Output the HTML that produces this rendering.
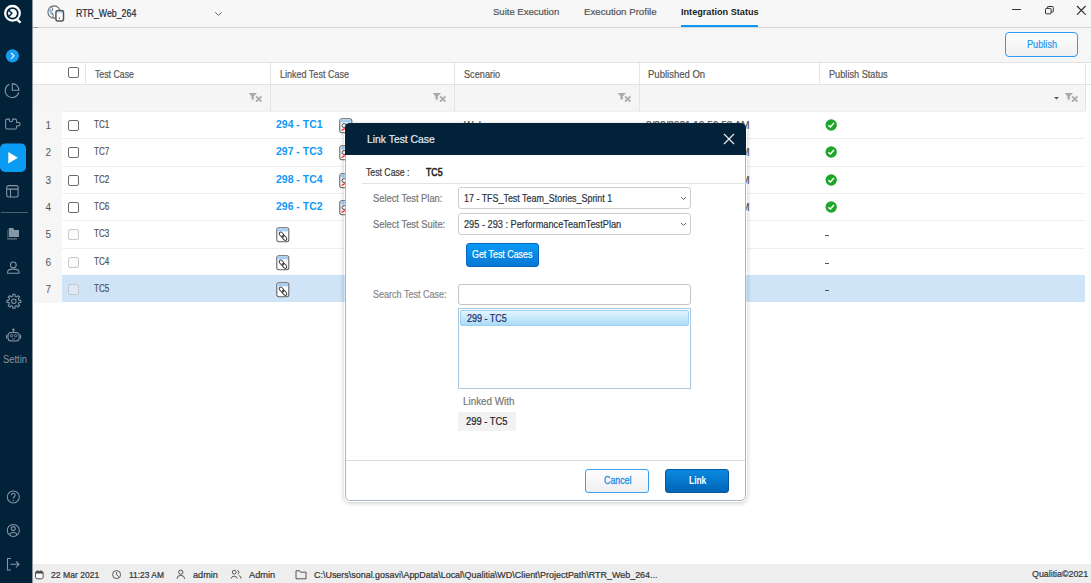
<!DOCTYPE html>
<html><head><meta charset="utf-8">
<style>
*{margin:0;padding:0;box-sizing:border-box}
html,body{width:1091px;height:583px;overflow:hidden;background:#fff;font-family:"Liberation Sans",sans-serif;color:#333}
.a{position:absolute}
.t{position:absolute;white-space:nowrap;line-height:1;-webkit-text-stroke:0.2px currentColor}
</style></head><body>
<div class="a" style="left:32px;top:0px;width:1059px;height:27px;background:#f7f7f7"></div>
<div class="a" style="left:32px;top:27px;width:1059px;height:1px;background:#d6d6d6"></div>
<div class="a" style="left:32px;top:27px;width:6px;height:1px;background:#9a9a9a"></div>
<div class="a" style="left:32px;top:28px;width:1059px;height:34px;background:#f6f6f6"></div>
<div class="a" style="left:32px;top:62px;width:1059px;height:1px;background:#e2e2e2"></div>
<div class="a" style="left:32px;top:63px;width:1053px;height:21px;background:#fff"></div>
<div class="a" style="left:32px;top:84px;width:1059px;height:1px;background:#e2e2e2"></div>
<div class="a" style="left:32px;top:85px;width:1053px;height:26px;background:#f5f5f5"></div>
<div class="a" style="left:85px;top:63px;width:1px;height:21px;background:#e4e4e4"></div>
<div class="a" style="left:270px;top:63px;width:1px;height:48px;background:#e4e4e4"></div>
<div class="a" style="left:454px;top:63px;width:1px;height:48px;background:#e4e4e4"></div>
<div class="a" style="left:639px;top:63px;width:1px;height:48px;background:#e4e4e4"></div>
<div class="a" style="left:819px;top:63px;width:1px;height:21px;background:#e4e4e4"></div>
<div class="a" style="left:1085px;top:63px;width:1px;height:48px;background:#e4e4e4"></div>
<svg class="a" style="left:44px;top:2px" width="24" height="22" viewBox="0 0 24 22">
 <defs><linearGradient id="pg" x1="0" y1="0" x2="0" y2="1"><stop offset="0" stop-color="#8cc4f7"/><stop offset="0.35" stop-color="#fff"/></linearGradient></defs>
 <circle cx="10" cy="10" r="6.1" fill="#fff" stroke="#6a6a6a" stroke-width="1.1"/>
 <path d="M5.2 6.2 Q7 5.5 7.6 8.5 Q8 10.5 9.6 11.5 Q9.8 13 8.6 13.5 Q6.5 12.5 5.8 10.8 Q4.6 9 5.2 6.2 Z" fill="#8cc0f2"/>
 <path d="M7.8 14.5 Q9 15 9.5 16" fill="none" stroke="#8cc0f2" stroke-width="1.2"/>
 <path d="M7.5 4.5 Q9.5 7 8.5 9 M8 11 Q10 13 9 16" fill="none" stroke="#555" stroke-width="0.8"/>
 <rect x="11.9" y="8.6" width="7.6" height="10.3" rx="2" fill="url(#pg)" stroke="#555" stroke-width="1.5"/>
 <circle cx="15.4" cy="16.3" r="0.75" fill="#444"/>
</svg>
<div class="t" style="left:75.80px;top:8.36px;font-size:10.5px;color:#1e2a3a;transform:scaleX(0.8376);transform-origin:0 0;">RTR_Web_264</div>
<svg class="a" style="left:214px;top:11px" width="9" height="6" viewBox="0 0 9 6"><path d="M1.2 1.3 L4.4 4.3 L7.6 1.3" fill="none" stroke="#555" stroke-width="0.9"/></svg>
<div class="t" style="left:492.80px;top:7.21px;font-size:9.5px;color:#555;transform:scaleX(1.0028);transform-origin:0 0;">Suite Execution</div>
<div class="t" style="left:583.70px;top:7.21px;font-size:9.5px;color:#555;transform:scaleX(1.0184);transform-origin:0 0;">Execution Profile</div>
<div class="t" style="left:680.60px;top:7.21px;font-size:9.5px;color:#222;font-weight:bold;-webkit-text-stroke:0;transform:scaleX(0.9609);transform-origin:0 0;">Integration Status</div>
<div class="a" style="left:681px;top:25px;width:77px;height:2px;background:#0a97f5"></div>
<div class="a" style="left:1012px;top:9px;width:9px;height:1px;background:#333"></div>
<svg class="a" style="left:1045px;top:6px" width="10" height="9" viewBox="0 0 10 9"><rect x="0.5" y="2.4" width="5.6" height="5.4" rx="0.8" fill="none" stroke="#333" stroke-width="1"/><path d="M2.4 2.4 V1.3 Q2.4 0.5 3.2 0.5 H7.5 Q8.3 0.5 8.3 1.3 V5.3 Q8.3 6.1 7.5 6.1 H6.1" fill="none" stroke="#333" stroke-width="1"/></svg>
<svg class="a" style="left:1076px;top:5px" width="11" height="11" viewBox="0 0 11 11"><path d="M1 1 L9.6 9.6 M9.6 1 L1 9.6" stroke="#2a2a2a" stroke-width="1.1"/></svg>
<div class="a" style="left:1005px;top:32px;width:73px;height:25px;border:1.6px solid #2a9cf7;border-radius:4px;background:linear-gradient(#fefefe,#efefef)"></div>
<div class="t" style="left:1026.60px;top:39.78px;font-size:10px;color:#1e96f5;transform:scaleX(0.9177);transform-origin:0 0;">Publish</div>
<div class="a" style="left:68px;top:67px;width:11px;height:11px;border:1px solid #6a6a6a;border-radius:2px;background:#fff"></div>
<div class="t" style="left:95.10px;top:69.36px;font-size:10.5px;color:#555;transform:scaleX(0.8332);transform-origin:0 0;">Test Case</div>
<div class="t" style="left:279.80px;top:69.36px;font-size:10.5px;color:#555;transform:scaleX(0.8574);transform-origin:0 0;">Linked Test Case</div>
<div class="t" style="left:464.00px;top:69.36px;font-size:10.5px;color:#555;transform:scaleX(0.8735);transform-origin:0 0;">Scenario</div>
<div class="t" style="left:648.40px;top:69.36px;font-size:10.5px;color:#555;transform:scaleX(0.9057);transform-origin:0 0;">Published On</div>
<div class="t" style="left:829.30px;top:69.36px;font-size:10.5px;color:#555;transform:scaleX(0.8745);transform-origin:0 0;">Publish Status</div>
<svg class="a" style="left:248px;top:92px" width="15" height="11" viewBox="0 0 15 11"><path d="M0.6 0.9 H9 L5.9 4.2 V7.6 H3.4 V4.2 Z" fill="#ababab"/><path d="M8.1 4.4 L13.4 9.6 M13.4 4.4 L8.1 9.6" stroke="#ababab" stroke-width="1.8"/></svg>
<svg class="a" style="left:432px;top:92px" width="15" height="11" viewBox="0 0 15 11"><path d="M0.6 0.9 H9 L5.9 4.2 V7.6 H3.4 V4.2 Z" fill="#ababab"/><path d="M8.1 4.4 L13.4 9.6 M13.4 4.4 L8.1 9.6" stroke="#ababab" stroke-width="1.8"/></svg>
<svg class="a" style="left:617px;top:92px" width="15" height="11" viewBox="0 0 15 11"><path d="M0.6 0.9 H9 L5.9 4.2 V7.6 H3.4 V4.2 Z" fill="#ababab"/><path d="M8.1 4.4 L13.4 9.6 M13.4 4.4 L8.1 9.6" stroke="#ababab" stroke-width="1.8"/></svg>
<svg class="a" style="left:1064px;top:92px" width="15" height="11" viewBox="0 0 15 11"><path d="M0.6 0.9 H9 L5.9 4.2 V7.6 H3.4 V4.2 Z" fill="#ababab"/><path d="M8.1 4.4 L13.4 9.6 M13.4 4.4 L8.1 9.6" stroke="#ababab" stroke-width="1.8"/></svg>
<svg class="a" style="left:1054px;top:97px" width="6" height="3" viewBox="0 0 6 3"><path d="M0 0 H5 L2.5 2.5 Z" fill="#555"/></svg>
<div class="a" style="left:34px;top:111px;width:28px;height:192px;background:#f6f6f6"></div>
<div class="a" style="left:62px;top:111px;width:1023px;height:27px;background:#fff"></div>
<div class="a" style="left:62px;top:111px;width:1023px;height:1px;background:#efefef"></div>
<div class="t" style="left:45.50px;top:120.78px;font-size:10px;color:#555;-webkit-text-stroke:0;">1</div>
<div class="a" style="left:68px;top:120px;width:11px;height:11px;border:1px solid #6a6a6a;border-radius:2px;background:#fff"></div>
<div class="t" style="left:94.00px;top:119.78px;font-size:10px;color:#505050;transform:scaleX(0.8046);transform-origin:0 0;">TC1</div>
<div class="t" style="left:275.60px;top:118.94px;font-size:11px;color:#0f9af7;font-weight:bold;-webkit-text-stroke:0;transform:scaleX(0.9507);transform-origin:0 0;">294 - TC1</div>
<div class="t" style="left:464.00px;top:120.78px;font-size:10px;color:#555;">Web</div>
<div class="t" style="left:646.00px;top:120.78px;font-size:10px;color:#555;transform:scaleX(1.0008);transform-origin:0 0;">3/22/2021 10:56:53 AM</div>
<svg class="a" style="left:825px;top:119px" width="13" height="13" viewBox="0 0 13 13"><circle cx="6.2" cy="6" r="5.7" fill="#1fa52a"/><path d="M3.4 6.4 L5.4 8 L8.9 3.9" fill="none" stroke="#fff" stroke-width="1.5"/></svg>
<svg class="a" style="left:339px;top:118px" width="14" height="16" viewBox="0 0 14 16"><rect x="0.8" y="0.8" width="12" height="14" rx="2" fill="#fff" stroke="#5e5e5e" stroke-width="1.05"/><rect x="1.4" y="1.4" width="10.8" height="3" fill="#a5cdf5"/><circle cx="5" cy="7.5" r="2" fill="none" stroke="#444" stroke-width="0.9"/><circle cx="8" cy="7.5" r="1.5" fill="none" stroke="#444" stroke-width="0.9"/><path d="M2.5 12.5 L7 10" stroke="#f22" stroke-width="1.3"/></svg>
<div class="a" style="left:62px;top:138px;width:1023px;height:28px;background:#fff"></div>
<div class="a" style="left:62px;top:138px;width:1023px;height:1px;background:#efefef"></div>
<div class="t" style="left:45.50px;top:147.78px;font-size:10px;color:#555;-webkit-text-stroke:0;">2</div>
<div class="a" style="left:68px;top:147px;width:11px;height:11px;border:1px solid #6a6a6a;border-radius:2px;background:#fff"></div>
<div class="t" style="left:94.00px;top:146.78px;font-size:10px;color:#505050;transform:scaleX(0.8046);transform-origin:0 0;">TC7</div>
<div class="t" style="left:275.60px;top:145.94px;font-size:11px;color:#0f9af7;font-weight:bold;-webkit-text-stroke:0;transform:scaleX(0.9507);transform-origin:0 0;">297 - TC3</div>
<div class="t" style="left:464.00px;top:147.78px;font-size:10px;color:#555;">Web</div>
<div class="t" style="left:646.00px;top:147.78px;font-size:10px;color:#555;transform:scaleX(1.0008);transform-origin:0 0;">3/22/2021 10:56:53 AM</div>
<svg class="a" style="left:825px;top:146px" width="13" height="13" viewBox="0 0 13 13"><circle cx="6.2" cy="6" r="5.7" fill="#1fa52a"/><path d="M3.4 6.4 L5.4 8 L8.9 3.9" fill="none" stroke="#fff" stroke-width="1.5"/></svg>
<svg class="a" style="left:339px;top:145px" width="14" height="16" viewBox="0 0 14 16"><rect x="0.8" y="0.8" width="12" height="14" rx="2" fill="#fff" stroke="#5e5e5e" stroke-width="1.05"/><rect x="1.4" y="1.4" width="10.8" height="3" fill="#a5cdf5"/><circle cx="5" cy="7.5" r="2" fill="none" stroke="#444" stroke-width="0.9"/><circle cx="8" cy="7.5" r="1.5" fill="none" stroke="#444" stroke-width="0.9"/><path d="M2.5 12.5 L7 10" stroke="#f22" stroke-width="1.3"/></svg>
<div class="a" style="left:62px;top:166px;width:1023px;height:27px;background:#fff"></div>
<div class="a" style="left:62px;top:166px;width:1023px;height:1px;background:#efefef"></div>
<div class="t" style="left:45.50px;top:175.78px;font-size:10px;color:#555;-webkit-text-stroke:0;">3</div>
<div class="a" style="left:68px;top:175px;width:11px;height:11px;border:1px solid #6a6a6a;border-radius:2px;background:#fff"></div>
<div class="t" style="left:94.00px;top:174.78px;font-size:10px;color:#505050;transform:scaleX(0.8046);transform-origin:0 0;">TC2</div>
<div class="t" style="left:275.60px;top:173.94px;font-size:11px;color:#0f9af7;font-weight:bold;-webkit-text-stroke:0;transform:scaleX(0.9507);transform-origin:0 0;">298 - TC4</div>
<div class="t" style="left:464.00px;top:175.78px;font-size:10px;color:#555;">Web</div>
<div class="t" style="left:646.00px;top:175.78px;font-size:10px;color:#555;transform:scaleX(1.0008);transform-origin:0 0;">3/22/2021 10:56:53 AM</div>
<svg class="a" style="left:825px;top:174px" width="13" height="13" viewBox="0 0 13 13"><circle cx="6.2" cy="6" r="5.7" fill="#1fa52a"/><path d="M3.4 6.4 L5.4 8 L8.9 3.9" fill="none" stroke="#fff" stroke-width="1.5"/></svg>
<svg class="a" style="left:339px;top:173px" width="14" height="16" viewBox="0 0 14 16"><rect x="0.8" y="0.8" width="12" height="14" rx="2" fill="#fff" stroke="#5e5e5e" stroke-width="1.05"/><rect x="1.4" y="1.4" width="10.8" height="3" fill="#a5cdf5"/><circle cx="5" cy="7.5" r="2" fill="none" stroke="#444" stroke-width="0.9"/><circle cx="8" cy="7.5" r="1.5" fill="none" stroke="#444" stroke-width="0.9"/><path d="M2.5 12.5 L7 10" stroke="#f22" stroke-width="1.3"/></svg>
<div class="a" style="left:62px;top:193px;width:1023px;height:27px;background:#fff"></div>
<div class="a" style="left:62px;top:193px;width:1023px;height:1px;background:#efefef"></div>
<div class="t" style="left:45.50px;top:202.78px;font-size:10px;color:#555;-webkit-text-stroke:0;">4</div>
<div class="a" style="left:68px;top:202px;width:11px;height:11px;border:1px solid #6a6a6a;border-radius:2px;background:#fff"></div>
<div class="t" style="left:94.00px;top:201.78px;font-size:10px;color:#505050;transform:scaleX(0.8046);transform-origin:0 0;">TC6</div>
<div class="t" style="left:275.60px;top:200.94px;font-size:11px;color:#0f9af7;font-weight:bold;-webkit-text-stroke:0;transform:scaleX(0.9507);transform-origin:0 0;">296 - TC2</div>
<div class="t" style="left:464.00px;top:202.78px;font-size:10px;color:#555;">Web</div>
<div class="t" style="left:646.00px;top:202.78px;font-size:10px;color:#555;transform:scaleX(1.0008);transform-origin:0 0;">3/22/2021 10:56:53 AM</div>
<svg class="a" style="left:825px;top:201px" width="13" height="13" viewBox="0 0 13 13"><circle cx="6.2" cy="6" r="5.7" fill="#1fa52a"/><path d="M3.4 6.4 L5.4 8 L8.9 3.9" fill="none" stroke="#fff" stroke-width="1.5"/></svg>
<svg class="a" style="left:339px;top:200px" width="14" height="16" viewBox="0 0 14 16"><rect x="0.8" y="0.8" width="12" height="14" rx="2" fill="#fff" stroke="#5e5e5e" stroke-width="1.05"/><rect x="1.4" y="1.4" width="10.8" height="3" fill="#a5cdf5"/><circle cx="5" cy="7.5" r="2" fill="none" stroke="#444" stroke-width="0.9"/><circle cx="8" cy="7.5" r="1.5" fill="none" stroke="#444" stroke-width="0.9"/><path d="M2.5 12.5 L7 10" stroke="#f22" stroke-width="1.3"/></svg>
<div class="a" style="left:62px;top:220px;width:1023px;height:28px;background:#fff"></div>
<div class="a" style="left:62px;top:220px;width:1023px;height:1px;background:#efefef"></div>
<div class="t" style="left:45.50px;top:229.78px;font-size:10px;color:#555;-webkit-text-stroke:0;">5</div>
<div class="a" style="left:68px;top:229px;width:11px;height:11px;border:1px solid #c8c8c8;border-radius:2px;background:#fbfbfb"></div>
<div class="t" style="left:94.00px;top:228.78px;font-size:10px;color:#505050;transform:scaleX(0.8046);transform-origin:0 0;">TC3</div>
<div class="a" style="left:825px;top:235px;width:4px;height:1px;background:#555"></div>
<svg class="a" style="left:276px;top:227px" width="14" height="16" viewBox="0 0 14 16"><rect x="0.8" y="0.8" width="12" height="14" rx="2" fill="#fff" stroke="#5e5e5e" stroke-width="1.05"/><rect x="1.4" y="1.4" width="10.8" height="3" fill="#a5cdf5"/><ellipse cx="5.6" cy="7.6" rx="2.9" ry="1.7" transform="rotate(50 5.6 7.6)" fill="none" stroke="#3a3a3a" stroke-width="0.95"/><ellipse cx="8.4" cy="10.8" rx="2.9" ry="1.7" transform="rotate(50 8.4 10.8)" fill="none" stroke="#3a3a3a" stroke-width="0.95"/></svg>
<div class="a" style="left:62px;top:248px;width:1023px;height:27px;background:#fff"></div>
<div class="a" style="left:62px;top:248px;width:1023px;height:1px;background:#efefef"></div>
<div class="t" style="left:45.50px;top:257.79px;font-size:10px;color:#555;-webkit-text-stroke:0;">6</div>
<div class="a" style="left:68px;top:257px;width:11px;height:11px;border:1px solid #c8c8c8;border-radius:2px;background:#fbfbfb"></div>
<div class="t" style="left:94.00px;top:256.79px;font-size:10px;color:#505050;transform:scaleX(0.8046);transform-origin:0 0;">TC4</div>
<div class="a" style="left:825px;top:263px;width:4px;height:1px;background:#555"></div>
<svg class="a" style="left:276px;top:255px" width="14" height="16" viewBox="0 0 14 16"><rect x="0.8" y="0.8" width="12" height="14" rx="2" fill="#fff" stroke="#5e5e5e" stroke-width="1.05"/><rect x="1.4" y="1.4" width="10.8" height="3" fill="#a5cdf5"/><ellipse cx="5.6" cy="7.6" rx="2.9" ry="1.7" transform="rotate(50 5.6 7.6)" fill="none" stroke="#3a3a3a" stroke-width="0.95"/><ellipse cx="8.4" cy="10.8" rx="2.9" ry="1.7" transform="rotate(50 8.4 10.8)" fill="none" stroke="#3a3a3a" stroke-width="0.95"/></svg>
<div class="a" style="left:62px;top:275px;width:1023px;height:27px;background:#cfe4f6"></div>
<div class="t" style="left:45.50px;top:284.79px;font-size:10px;color:#555;-webkit-text-stroke:0;">7</div>
<div class="a" style="left:68px;top:284px;width:11px;height:11px;border:1px solid #c8c8c8;border-radius:2px;background:#dde9f5"></div>
<div class="t" style="left:94.00px;top:283.79px;font-size:10px;color:#505050;transform:scaleX(0.8046);transform-origin:0 0;">TC5</div>
<div class="a" style="left:825px;top:290px;width:4px;height:1px;background:#555"></div>
<svg class="a" style="left:276px;top:282px" width="14" height="16" viewBox="0 0 14 16"><rect x="0.8" y="0.8" width="12" height="14" rx="2" fill="#fff" stroke="#5e5e5e" stroke-width="1.05"/><rect x="1.4" y="1.4" width="10.8" height="3" fill="#a5cdf5"/><ellipse cx="5.6" cy="7.6" rx="2.9" ry="1.7" transform="rotate(50 5.6 7.6)" fill="none" stroke="#3a3a3a" stroke-width="0.95"/><ellipse cx="8.4" cy="10.8" rx="2.9" ry="1.7" transform="rotate(50 8.4 10.8)" fill="none" stroke="#3a3a3a" stroke-width="0.95"/></svg>
<div class="a" style="left:32px;top:564px;width:1059px;height:19px;background:#eeeeee"></div>
<svg class="a" style="left:34px;top:569px" width="11" height="11" viewBox="0 0 11 11"><rect x="1.5" y="2.4" width="7.6" height="7.4" rx="1.6" fill="#fafafa" stroke="#4a4a4a" stroke-width="0.95"/><path d="M1.5 4.6 V3.6 Q1.5 2.4 3 2.4 H7.6 Q9.1 2.4 9.1 3.6 V4.6 Z" fill="#4a4a4a"/><path d="M3.7 1.2 V2.6 M6.9 1.2 V2.6" stroke="#4a4a4a" stroke-width="0.9"/></svg>
<div class="t" style="left:51.10px;top:570.63px;font-size:9px;color:#333;transform:scaleX(0.9578);transform-origin:0 0;">22 Mar 2021</div>
<svg class="a" style="left:112px;top:570px" width="10" height="10" viewBox="0 0 10 10"><circle cx="4.6" cy="4.6" r="4" fill="none" stroke="#444" stroke-width="0.9"/><path d="M4.6 2.2 V4.8 L6.6 6.6" fill="none" stroke="#444" stroke-width="0.9"/></svg>
<div class="t" style="left:128.90px;top:570.63px;font-size:9px;color:#333;transform:scaleX(0.9369);transform-origin:0 0;">11:23 AM</div>
<svg class="a" style="left:176px;top:569px" width="10" height="11" viewBox="0 0 10 11"><circle cx="4.8" cy="3.2" r="2.1" fill="none" stroke="#444" stroke-width="0.9"/><path d="M1 9.8 A3.8 3.4 0 0 1 8.6 9.8" fill="none" stroke="#444" stroke-width="0.9"/></svg>
<div class="t" style="left:193.30px;top:570.63px;font-size:9px;color:#333;transform:scaleX(1.0158);transform-origin:0 0;">admin</div>
<svg class="a" style="left:230px;top:569px" width="12" height="11" viewBox="0 0 12 11"><circle cx="4.2" cy="3.2" r="1.9" fill="none" stroke="#444" stroke-width="0.9"/><path d="M1 9.6 A3.3 3.2 0 0 1 7.4 9.6" fill="none" stroke="#444" stroke-width="0.9"/><path d="M7.3 1.5 A1.9 1.9 0 0 1 7.8 5.1 M8.8 6.5 A3 3 0 0 1 11 9.6" fill="none" stroke="#444" stroke-width="0.9"/></svg>
<div class="t" style="left:248.90px;top:570.63px;font-size:9px;color:#333;transform:scaleX(1.0231);transform-origin:0 0;">Admin</div>
<svg class="a" style="left:295px;top:569px" width="12" height="11" viewBox="0 0 12 11"><path d="M1 1.8 H4.6 L5.6 3.2 H11 V9.8 H1 Z" fill="none" stroke="#444" stroke-width="0.9" stroke-linejoin="round"/></svg>
<div class="t" style="left:313.90px;top:570.63px;font-size:9px;color:#333;transform:scaleX(0.9933);transform-origin:0 0;">C:\Users\sonal.gosavi\AppData\Local\Qualitia\WD\Client\ProjectPath\RTR_Web_264...</div>
<div class="t" style="left:1032.00px;top:569.63px;font-size:9px;color:#333;transform:scaleX(0.9830);transform-origin:0 0;">Qualitia©2021</div>
<div class="a" style="left:344px;top:123px;width:403px;height:379px;border-radius:6px;box-shadow:0 1px 5px rgba(0,0,0,0.22)"></div>
<div class="a" style="left:345px;top:123px;width:401px;height:378px;background:#fff;border:1px solid #a9b6c2;border-radius:5px"></div>
<div class="a" style="left:345px;top:123px;width:401px;height:32px;background:#02223a;border-radius:5px 5px 0 0"></div>
<div class="t" style="left:366.70px;top:133.94px;font-size:11px;color:#e6eaee;transform:scaleX(0.9424);transform-origin:0 0;">Link Test Case</div>
<svg class="a" style="left:723px;top:133px" width="12" height="12" viewBox="0 0 12 12"><path d="M1 1 L11 11 M11 1 L1 11" stroke="#e8ecf0" stroke-width="1.2"/></svg>
<div class="t" style="left:366.40px;top:167.78px;font-size:10px;color:#333;transform:scaleX(0.8697);transform-origin:0 0;">Test Case :</div>
<div class="t" style="left:426.40px;top:167.78px;font-size:10px;color:#222;transform:scaleX(0.8734);transform-origin:0 0;-webkit-text-stroke:0.55px #222;">TC5</div>
<div class="a" style="left:362px;top:183px;width:384px;height:1px;background:#e2e2e2"></div>
<div class="t" style="left:373.10px;top:193.78px;font-size:10px;color:#777;transform:scaleX(0.9340);transform-origin:0 0;">Select Test Plan:</div>
<div class="a" style="left:458px;top:187px;width:233px;height:22px;border:1px solid #cdcdcd;border-radius:3px;background:#fff"></div>
<div class="t" style="left:463.60px;top:193.78px;font-size:10px;color:#2a3540;transform:scaleX(0.8907);transform-origin:0 0;">17 - TFS_Test Team_Stories_Sprint 1</div>
<svg class="a" style="left:680px;top:196px" width="7" height="5" viewBox="0 0 7 5"><path d="M1 1 L3.5 3.5 L6 1" fill="none" stroke="#555" stroke-width="0.9"/></svg>
<div class="t" style="left:373.10px;top:219.78px;font-size:10px;color:#777;transform:scaleX(0.9367);transform-origin:0 0;">Select Test Suite:</div>
<div class="a" style="left:458px;top:213px;width:233px;height:22px;border:1px solid #cdcdcd;border-radius:3px;background:#fff"></div>
<div class="t" style="left:463.60px;top:219.78px;font-size:10px;color:#2a3540;transform:scaleX(0.9212);transform-origin:0 0;">295 - 293 : PerformanceTeamTestPlan</div>
<svg class="a" style="left:680px;top:222px" width="7" height="5" viewBox="0 0 7 5"><path d="M1 1 L3.5 3.5 L6 1" fill="none" stroke="#555" stroke-width="0.9"/></svg>
<div class="a" style="left:466px;top:243px;width:73px;height:24px;border:1px solid #0868c0;border-radius:3px;background:linear-gradient(#0a9af7,#0878d3)"></div>
<div class="t" style="left:472.30px;top:249.78px;font-size:10px;color:#fff;transform:scaleX(0.8859);transform-origin:0 0;">Get Test Cases</div>
<div class="t" style="left:373.30px;top:289.79px;font-size:10px;color:#888;transform:scaleX(0.9028);transform-origin:0 0;">Search Test Case:</div>
<div class="a" style="left:458px;top:284px;width:233px;height:21px;border:1px solid #c4c4c4;border-radius:3px;background:#fff"></div>
<div class="a" style="left:458px;top:308px;width:233px;height:81px;border:1px solid #a9c8e2;background:#fff"></div>
<div class="a" style="left:460px;top:310px;width:229px;height:16px;background:linear-gradient(#e4f5fd,#aadcf6);border:1px solid #9fd0ef;border-radius:2px"></div>
<div class="t" style="left:466.75px;top:313.79px;font-size:10px;color:#1a2a6a;transform:scaleX(0.8988);transform-origin:0 0;">299 - TC5</div>
<div class="t" style="left:462.80px;top:396.79px;font-size:10px;color:#777;transform:scaleX(0.9857);transform-origin:0 0;">Linked With</div>
<div class="a" style="left:458px;top:412px;width:58px;height:19px;background:#f2f2f2"></div>
<div class="t" style="left:466.30px;top:416.79px;font-size:10px;color:#222;transform:scaleX(0.9349);transform-origin:0 0;">299 - TC5</div>
<div class="a" style="left:346px;top:460px;width:399px;height:1px;background:#dcdcdc"></div>
<div class="a" style="left:585px;top:469px;width:64px;height:24px;border:1px solid #3aa0f5;border-radius:3px;background:linear-gradient(#fefefe,#efefef)"></div>
<div class="t" style="left:603.60px;top:475.79px;font-size:10px;color:#1b8eec;transform:scaleX(0.8834);transform-origin:0 0;-webkit-text-stroke:0.3px #1b8eec;">Cancel</div>
<div class="a" style="left:665px;top:469px;width:64px;height:24px;border:1px solid #0558a0;border-radius:3px;background:linear-gradient(#0a8ae0,#0064b6)"></div>
<div class="t" style="left:688.90px;top:475.79px;font-size:10px;color:#fff;font-weight:bold;-webkit-text-stroke:0;transform:scaleX(0.8416);transform-origin:0 0;">Link</div>
<div class="a" style="left:0;top:0;width:32px;height:583px;background:#02223a"></div>
<svg class="a" style="left:0;top:0" width="32" height="583" viewBox="0 0 32 583">
  <circle cx="12.5" cy="13.3" r="7.3" fill="none" stroke="#fff" stroke-width="2.3"/>
  <path d="M16.8 19.3 L20.6 22.6" stroke="#fff" stroke-width="2.4"/>
  <circle cx="12.5" cy="13.3" r="4.4" fill="#fff"/>
  <path d="M8.2 9.6 L11.9 13.3 L8.2 17" fill="none" stroke="#02223a" stroke-width="1.4"/>
  <circle cx="12.4" cy="55.8" r="6.6" fill="#1a9bf2"/>
  <path d="M11 52.8 L14 55.8 L11 58.8" fill="none" stroke="#fff" stroke-width="1.1"/>
  <path d="M9.3 84.3 A6.9 6.9 0 1 0 18.8 92.4" fill="none" stroke="#8596a4" stroke-width="1.1"/>
  <path d="M12.3 83.6 V90.3 H18.9 A6.6 6.7 0 0 0 12.3 83.6 Z" fill="none" stroke="#8596a4" stroke-width="1.1"/>
  <path d="M7.1 119.1 H9.4 V120.2 A1.6 1.6 0 0 0 12.6 120.2 V119.1 H15.1 Q16.6 119.1 16.6 120.6 V122.4 H18.4 A1.75 1.75 0 0 1 18.4 125.9 H16.6 V127.4 Q16.6 128.9 15.1 128.9 H7.1 Q5.6 128.9 5.6 127.4 V120.6 Q5.6 119.1 7.1 119.1 Z" fill="none" stroke="#8596a4" stroke-width="1.05"/>
  <rect x="0" y="143.5" width="26" height="28.5" rx="5" fill="#0a9cf5"/>
  <path d="M8.3 152 L17.8 157.7 L8.3 163.4 Z" fill="#fff"/>
  <rect x="6.7" y="185.6" width="11.4" height="11.4" rx="2" fill="none" stroke="#8596a4" stroke-width="1.05"/>
  <path d="M6.7 189.1 H18.1 M10.5 189.1 V197" stroke="#8596a4" stroke-width="1.05"/>
  <path d="M1 212.5 H28" stroke="#4a5e6e" stroke-width="1"/>
  <path d="M8.8 228 H13.2 L14.3 229.9 H19 V237 H8.8 Z" fill="#8597a5"/>
  <path d="M7.3 230 H8.3 V238 H17.1 V239.7 H7.3 Z" fill="#4b5f70"/>
  <circle cx="13.3" cy="264.9" r="2.9" fill="none" stroke="#8596a4" stroke-width="1.05"/>
  <path d="M7.6 273.2 V272 Q7.6 269.1 13.3 269.1 Q19 269.1 19 272 V273.2 Z" fill="none" stroke="#8596a4" stroke-width="1.05"/>
  <path d="M11.99 296.68 L12.80 296.12 L12.79 294.29 L15.01 294.29 L15.00 296.12 L15.81 296.68 L16.79 296.86 L18.07 295.56 L19.64 297.13 L18.34 298.41 L18.52 299.39 L19.08 300.20 L20.91 300.19 L20.91 302.41 L19.08 302.40 L18.52 303.21 L18.34 304.19 L19.64 305.47 L18.07 307.04 L16.79 305.74 L15.81 305.92 L15.00 306.48 L15.01 308.31 L12.79 308.31 L12.80 306.48 L11.99 305.92 L11.01 305.74 L9.73 307.04 L8.16 305.47 L9.46 304.19 L9.28 303.21 L8.72 302.40 L6.89 302.41 L6.89 300.19 L8.72 300.20 L9.28 299.39 L9.46 298.41 L8.16 297.13 L9.73 295.56 L11.01 296.86 Z" fill="none" stroke="#8596a4" stroke-width="1.05" stroke-linejoin="round"/>
  <circle cx="13.9" cy="301.3" r="2.2" fill="none" stroke="#8596a4" stroke-width="1.05"/>
  <rect x="8" y="332.5" width="11.2" height="8.5" rx="3" fill="none" stroke="#8596a4" stroke-width="1.05"/>
  <path d="M6.6 334.8 V338.4 M20.6 334.8 V338.4 M13.4 331 V332.5" stroke="#8596a4" stroke-width="1.05"/>
  <circle cx="13.4" cy="329.7" r="1.2" fill="#8596a4"/>
  <circle cx="11.5" cy="335.6" r="1.2" fill="none" stroke="#8596a4" stroke-width="0.9"/>
  <circle cx="15.6" cy="335.6" r="1.2" fill="none" stroke="#8596a4" stroke-width="0.9"/>
  <path d="M12 338.8 Q13.3 339.8 14.6 338.8" fill="none" stroke="#8596a4" stroke-width="0.9"/>
  <circle cx="13.3" cy="496.9" r="6" fill="none" stroke="#8596a4" stroke-width="1.05"/>
  <path d="M11.4 495.2 A1.9 1.9 0 1 1 14 496.9 Q13.3 497.4 13.3 498.6" fill="none" stroke="#8596a4" stroke-width="1.1"/>
  <circle cx="13.3" cy="500.3" r="0.65" fill="#8596a4"/>
  <circle cx="13.3" cy="530.4" r="6" fill="none" stroke="#8596a4" stroke-width="1.05"/>
  <circle cx="13.3" cy="528.6" r="2" fill="none" stroke="#8596a4" stroke-width="1.05"/>
  <path d="M9.4 535 Q10 532.4 13.3 532.4 Q16.6 532.4 17.2 535" fill="none" stroke="#8596a4" stroke-width="1.05"/>
  <path d="M11 558.5 H7.5 V570 H11" fill="none" stroke="#8596a4" stroke-width="1.05"/>
  <path d="M10.5 564.3 H19 M16 561.3 L19 564.3 L16 567.3" fill="none" stroke="#8596a4" stroke-width="1.05"/>
</svg>
<div class="t" style="left:3.00px;top:354.79px;font-size:10px;color:#8596a4;transform:scaleX(0.9385);transform-origin:0 0;-webkit-text-stroke:0;">Settin</div>
<div class="a" style="left:32px;top:0px;width:1px;height:583px;background:#8a959e"></div>
</body></html>
